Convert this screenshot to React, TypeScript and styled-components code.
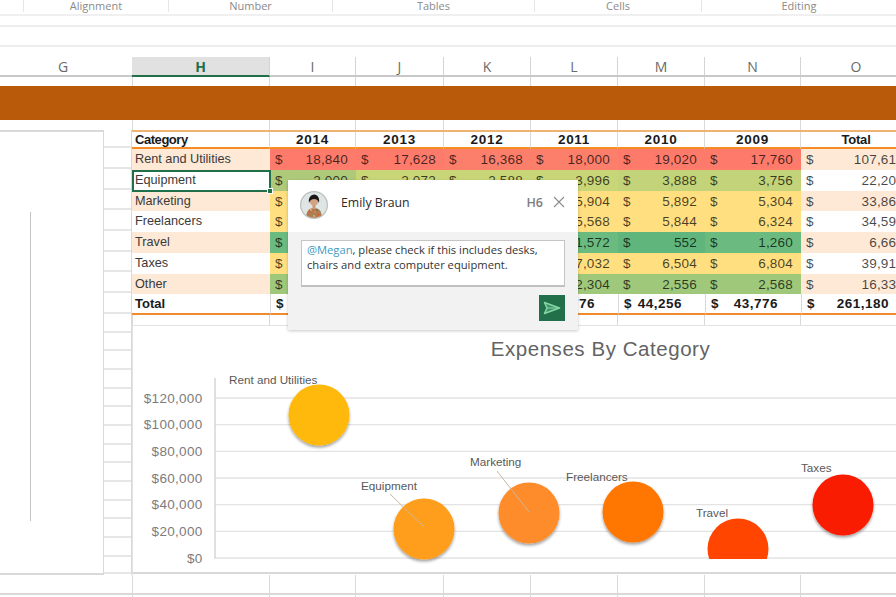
import React from "react";
import styled, { createGlobalStyle } from "styled-components";

const Global = createGlobalStyle`
  html, body { margin: 0; padding: 0; background: #fff; }
  * { box-sizing: border-box; }
`;

const COLS = [138, 86, 88, 87, 87, 87, 96, 111];
const LINE = "#d9d9d9";
const HEAT: Record<string, string> = {
  red: "#fe7b6b", red2: "#fc7f6c", lime: "#c9d678", olive: "#c2d37a", sage: "#aec97a", yellow: "#ffdf7f", yellow2: "#fedd7d",
  green: "#6bbb80", green2: "#5fb57b", moss: "#9fc87b", peach: "#fde9d6", white: "#ffffff",
};

type Row = { name: string; tint: string; cells: [string, string][]; total: string };
const ROWS: Row[] = [
  { name: "Rent and Utilities", tint: "peach", total: "107,616", cells: [["18,840", "red"], ["17,628", "red"], ["16,368", "red2"], ["18,000", "red2"], ["19,020", "red"], ["17,760", "red"]] },
  { name: "Equipment", tint: "white", total: "22,200", cells: [["2,000", "sage"], ["2,072", "lime"], ["2,588", "lime"], ["3,996", "lime"], ["3,888", "olive"], ["3,756", "olive"]] },
  { name: "Marketing", tint: "peach", total: "33,860", cells: [["5,000", "yellow"], ["5,000", "yellow"], ["5,000", "yellow"], ["5,904", "yellow"], ["5,892", "yellow"], ["5,304", "yellow"]] },
  { name: "Freelancers", tint: "white", total: "34,590", cells: [["5,000", "yellow"], ["5,000", "yellow"], ["5,000", "yellow"], ["5,568", "yellow"], ["5,844", "yellow"], ["6,324", "yellow"]] },
  { name: "Travel", tint: "peach", total: "6,660", cells: [["1,000", "green"], ["1,000", "green"], ["1,000", "green"], ["1,572", "green"], ["552", "green2"], ["1,260", "green"]] },
  { name: "Taxes", tint: "white", total: "39,910", cells: [["6,000", "yellow"], ["6,000", "yellow"], ["6,000", "yellow"], ["7,032", "yellow"], ["6,504", "yellow"], ["6,804", "yellow"]] },
  { name: "Other", tint: "peach", total: "16,330", cells: [["2,000", "moss"], ["2,000", "moss"], ["2,000", "moss"], ["2,304", "moss"], ["2,556", "moss"], ["2,568", "moss"]] },
];
const TOTALS = ["43,104", "43,080", "42,588", "43,776", "44,256", "43,776", "261,180"];
const YEARS = ["2014", "2013", "2012", "2011", "2010", "2009"];
const HEADS = ["H", "I", "J", "K", "L", "M", "N", "O"];
const RIBBON: [string, number][] = [["Alignment", 145], ["Number", 164], ["Tables", 202], ["Cells", 167], ["Editing", 195]];
const STUBS = [18, 21, 21, 20, 21, 21, 20, 21, 21, 19, 18, 19, 19, 18, 19, 19, 18, 19, 19, 18, 19, 19, 17];
const AXIS: [string, number][] = [["$120,000", 398], ["$100,000", 424.6], ["$80,000", 451.3], ["$60,000", 478], ["$40,000", 504.6], ["$20,000", 531.3], ["$0", 558]];
const BUBBLES: [number, number, string][] = [[319, 415, "#ffb908"], [424, 529, "#ff9e1a"], [529, 513, "#ff8c2b"], [633, 512, "#ff7700"], [843, 505, "#fa1b00"]];
const LABELS: [string, number, number][] = [["Rent and Utilities", 229, 384], ["Equipment", 361, 490], ["Marketing", 470, 466], ["Freelancers", 566, 481], ["Travel", 696, 517], ["Taxes", 801, 472]];
const SPECKS: [number, number, string][] = [[9, 21, "#d45f2e"], [12, 24, "#7f9a5a"], [15, 21, "#e08a4a"], [18, 24, "#d45f2e"], [20, 21, "#7f9a5a"], [14, 25, "#e8b27a"], [11, 19, "#e8b27a"], [17, 19, "#5f7a4a"]];

const Page = styled.div`
  position: relative;
  width: 896px;
  height: 597px;
  overflow: hidden;
  background: #fff;
  font-family: "Liberation Sans", Arial, sans-serif;
`;
const Ribbon = styled.div`
  display: flex;
  height: 16px;
  padding-left: 23px;
  border-bottom: 2px solid #f0f0f0;
`;
const RibbonGroup = styled.div<{ $w: number }>`
  width: ${(p) => p.$w}px;
  flex: none;
  height: 12px;
  border-left: 1px solid #e6e6e6;
  font: 11px/12px "Open Sans", sans-serif;
  color: #8a8a8a;
  text-align: center;
`;
const FormulaStrip = styled.div`
  height: 11px;
  border-bottom: 2px solid #ececec;
`;
const FormulaBar = styled.div`
  height: 20px;
  border-bottom: 2px solid #ececec;
`;
const ColumnHeaders = styled.div`
  display: flex;
  height: 20px;
  margin-top: 10px;
  border-bottom: 2px solid #c8c8c8;
`;
const CornerHead = styled.div`
  width: 132px;
  flex: none;
  padding-right: 6px;
  text-align: center;
  font: 14px/19px "Open Sans", sans-serif;
  color: #6a6a6a;
`;
const ColumnHead = styled.div<{ $w: number; $active?: boolean }>`
  width: ${(p) => p.$w}px;
  flex: none;
  height: ${(p) => (p.$active ? "20px" : "18px")};
  border-right: 1px solid #d4d4d4;
  text-align: center;
  font: ${(p) => (p.$active ? 700 : 400)} 14px/19px "Open Sans", sans-serif;
  color: ${(p) => (p.$active ? "#21704a" : "#6a6a6a")};
  background: ${(p) => (p.$active ? "#e1e1e1" : "transparent")};
  border-bottom: ${(p) => (p.$active ? "2px solid #21704a" : "0")};
`;
const BlankRow = styled.div<{ $h: number; $line?: boolean; $flush?: boolean }>`
  display: flex;
  height: ${(p) => p.$h}px;
  padding-left: ${(p) => (p.$flush ? 0 : 132)}px;
  border-bottom: ${(p) => (p.$line ? `2px solid ${LINE}` : "0")};
`;
const BlankCell = styled.div<{ $w: number }>`
  width: ${(p) => p.$w}px;
  flex: none;
  border-right: 1px solid ${LINE};
  &:first-child { border-left: 1px solid ${LINE}; }
`;
const Band = styled.div`
  height: 34px;
  background: #b85a0a;
`;
const Sheet = styled.div`
  display: flex;
  height: 445px;
`;
const Side = styled.div`
  display: flex;
  width: 132px;
  flex: none;
  height: 445px;
`;
const SidePanel = styled.div`
  width: 104px;
  border-top: 2px solid ${LINE};
  border-right: 1px solid ${LINE};
  border-bottom: 2px solid ${LINE};
  padding: 80px 0 0 30px;
`;
const SideRule = styled.div`
  width: 1px;
  height: 309px;
  background: #c4c4c4;
`;
const Stubs = styled.div`
  width: 28px;
  border-right: 1px solid ${LINE};
`;
const Stub = styled.div<{ $h: number }>`
  height: ${(p) => p.$h}px;
  border-bottom: 2px solid #e6e6e6;
`;
const Main = styled.div`
  flex: 1;
  min-width: 0;
  overflow: hidden;
`;
const Table = styled.div`
  display: grid;
  grid-template-columns: ${COLS.map((c) => `${c}px`).join(" ")};
  grid-template-rows: 17px repeat(7, 20.75px) 20.75px;
  height: 185px;
  border-top: 2px solid #eeb273;
  font-size: 13.5px;
`;
const HeadCell = styled.div<{ $left?: boolean; $tight?: boolean }>`
  border-bottom: 2px solid #f58c26;
  border-right: 1px solid ${LINE};
  padding: 0 ${(p) => (p.$left ? "3px" : "0")};
  font: 700 ${(p) => (p.$left || p.$tight ? 13 : 13.5)}px/16px "Liberation Sans", sans-serif;
  letter-spacing: ${(p) => (p.$left ? "-0.45px" : p.$tight ? "-0.2px" : "0.7px")};
  color: #1a1a1a;
  text-align: ${(p) => (p.$left ? "left" : "center")};
`;
const NameCell = styled.div<{ $tint: string }>`
  position: relative;
  padding-left: 3px;
  background: ${(p) => HEAT[p.$tint]};
  font-size: 12.7px;
  line-height: 21px;
  color: #3a3a3a;
`;
const SelectedCell = styled.div`
  position: absolute;
  inset: 0 -1px -1px 0;
  z-index: 1;
  border: 2px solid #21704a;
`;
const Handle = styled.div`
  position: absolute;
  right: -4px;
  bottom: -4px;
  width: 6px;
  height: 6px;
  background: #21704a;
  border: 1px solid #fff;
`;
const AmountCell = styled.div<{ $tint: string }>`
  display: flex;
  justify-content: space-between;
  padding: 0 8px 0 5px;
  background: ${(p) => HEAT[p.$tint]};
  line-height: 21px;
  letter-spacing: 0.2px;
  color: rgba(0, 0, 0, 0.72);
`;
const TotalName = styled.div`
  padding-left: 3px;
  border-bottom: 2px solid #f08a2c;
  font: 700 13px/20px "Liberation Sans", sans-serif;
  color: #1a1a1a;
`;
const TotalCell = styled.div`
  display: flex;
  justify-content: space-between;
  padding: 0 23px 0 5px;
  border-bottom: 2px solid #f08a2c;
  border-left: 1px solid ${LINE};
  font: 700 13.5px/20px "Liberation Sans", sans-serif;
  letter-spacing: 0.5px;
  color: #1a1a1a;
`;
const ChartFrame = styled.div`
  height: 249px;
  border: 1px solid #e2e2e2;
  border-width: 1px 0 2px 1px;
  border-bottom-color: #d8d8d8;
  svg { display: block; }
`;
const Card = styled.div`
  position: absolute;
  left: 288px;
  top: 180px;
  width: 290px;
  height: 150px;
  background: #f2f2f2;
  box-shadow: 0 1px 3px rgba(0, 0, 0, 0.22);
  font-family: "Open Sans", sans-serif;
`;
const CardHead = styled.div`
  display: flex;
  align-items: center;
  height: 52px;
  padding: 0 13px 8px 12px;
  background: #fff;
`;
const Avatar = styled.svg`
  width: 28px;
  height: 28px;
  flex: none;
  margin-top: 6px;
`;
const Author = styled.div`
  flex: 1;
  margin-left: 13px;
  font-size: 12.3px;
  color: #2b2b2b;
`;
const CellRef = styled.div`
  margin-right: 10px;
  font-size: 12.5px;
  font-weight: 600;
  color: #7d7d7d;
`;
const CardBody = styled.div`
  display: flex;
  flex-direction: column;
  align-items: flex-end;
  padding: 8px 13px 0;
`;
const Note = styled.div`
  width: 100%;
  height: 47px;
  padding: 2px 5px;
  background: #fff;
  border: 1px solid #c4c4c4;
  border-bottom: 2px solid #c0c0c0;
  font-size: 11.2px;
  line-height: 14.5px;
  color: #333;
`;
const Mention = styled.span`
  color: #3d9ac2;
`;
const SendButton = styled.button`
  display: flex;
  align-items: center;
  justify-content: center;
  width: 26px;
  height: 26px;
  margin-top: 8px;
  padding: 0;
  border: 0;
  background: #21704a;
`;

function AvatarPicture() {
  return (
    <Avatar viewBox="0 0 28 28">
      <circle cx="14" cy="14" r="14" fill="#b9c0bd" />
      <circle cx="14" cy="14" r="12.8" fill="#dfe5e4" />
      <clipPath id="avatarClip"><circle cx="14" cy="14" r="12.8" /></clipPath>
      <g clipPath="url(#avatarClip)">
        <path d="M6 28c0-8 3-11 8-11s8 3 8 11z" fill="#b27a50" />
        {SPECKS.map(([x, y, c], i) => <circle key={i} cx={x} cy={y} r="0.9" fill={c} />)}
        <rect x="12.5" y="13" width="3" height="5" fill="#c99878" />
        <circle cx="14" cy="10.5" r="4" fill="#d4a182" />
        <path d="M9 12c-1-5 2-8.500 5.200-8.500S20 7 19 12c-.8-2.500-2.500-4-4.800-4S9.800 9.500 9 12z" fill="#171717" />
      </g>
    </Avatar>
  );
}

function ExpenseChart() {
  return (
    <svg width="764" height="246" viewBox="133 326 764 246">
      <defs>
        <filter id="bubbleShadow" x="-20%" y="-20%" width="140%" height="140%">
          <feDropShadow dx="0" dy="2" stdDeviation="1.8" floodColor="#000" floodOpacity="0.38" />
        </filter>
        <clipPath id="plotClip"><rect x="215" y="370" width="690" height="189" /></clipPath>
      </defs>
      <text x="600.500" y="356" textAnchor="middle" fontFamily="Liberation Sans" fontSize="20.500" letterSpacing="0.55" fill="#636363">Expenses By Category</text>
      {AXIS.map(([label, y]) => (
        <g key={label}>
          <line x1="215" x2="897" y1={y} y2={y} stroke="#e3e3e3" strokeWidth="1.300" />
          <text x="202.500" y={y + 4.500} textAnchor="end" fontFamily="Liberation Sans" fontSize="13.500" letterSpacing="0.3" fill="#7c7c7c">{label}</text>
        </g>
      ))}
      <line x1="215" x2="215" y1="378" y2="558.500" stroke="#cfcfcf" strokeWidth="1.300" />
      <circle cx="738" cy="549" r="30.500" fill="#ff4500" clipPath="url(#plotClip)" />
      {BUBBLES.map(([cx, cy, fill]) => (
        <circle key={cx} cx={cx} cy={cy} r="30.500" fill={fill} filter="url(#bubbleShadow)" />
      ))}
      <line x1="390" y1="494" x2="424" y2="527" stroke="#c8b89e" strokeWidth="1" />
      <line x1="497" y1="471" x2="529" y2="512" stroke="#c8b89e" strokeWidth="1" />
      {LABELS.map(([text, x, y]) => (
        <text key={text} x={x} y={y} fontFamily="Liberation Sans" fontSize="11.700" fill="#595959">{text}</text>
      ))}
    </svg>
  );
}

export default function App() {
  return (
    <Page>
      <Global />
      <Ribbon>
        {RIBBON.map(([label, w]) => (
          <RibbonGroup key={label} $w={w}>{label}</RibbonGroup>
        ))}
      </Ribbon>
      <FormulaStrip />
      <FormulaBar />
      <ColumnHeaders>
        <CornerHead>G</CornerHead>
        {HEADS.map((h, i) => (
          <ColumnHead key={h} $w={COLS[i]} $active={h === "H"}>{h}</ColumnHead>
        ))}
      </ColumnHeaders>
      <BlankRow $h={9}>{COLS.map((c, i) => <BlankCell key={i} $w={c} />)}</BlankRow>
      <Band />
      <BlankRow $h={10}>{COLS.map((c, i) => <BlankCell key={i} $w={c} />)}</BlankRow>
      <Sheet>
        <Side>
          <SidePanel><SideRule /></SidePanel>
          <Stubs>{STUBS.map((h, i) => <Stub key={i} $h={h} />)}</Stubs>
        </Side>
        <Main>
          <Table>
            <HeadCell $left>Category</HeadCell>
            {YEARS.map((y) => <HeadCell key={y}>{y}</HeadCell>)}
            <HeadCell $tight>Total</HeadCell>
            {ROWS.flatMap((r) => [
              <NameCell key={r.name} $tint={r.tint}>
                {r.name}
                {r.name === "Equipment" && <SelectedCell><Handle /></SelectedCell>}
              </NameCell>,
              ...r.cells.map(([v, tint], i) => (
                <AmountCell key={r.name + i} $tint={tint}><span>$</span><span>{v}</span></AmountCell>
              )),
              <AmountCell key={r.name + "t"} $tint={r.tint}><span>$</span><span>{r.total}</span></AmountCell>,
            ])}
            <TotalName>Total</TotalName>
            {TOTALS.map((v, i) => (
              <TotalCell key={i}><span>$</span><span>{v}</span></TotalCell>
            ))}
          </Table>
          <BlankRow $h={10} $flush>{COLS.map((c, i) => <BlankCell key={i} $w={c} />)}</BlankRow>
          <ChartFrame><ExpenseChart /></ChartFrame>
        </Main>
      </Sheet>
      <BlankRow $h={20} $line>{COLS.map((c, i) => <BlankCell key={i} $w={c} />)}</BlankRow>
      <BlankRow $h={3}>{COLS.map((c, i) => <BlankCell key={i} $w={c} />)}</BlankRow>
      <Card>
        <CardHead>
          <AvatarPicture />
          <Author>Emily Braun</Author>
          <CellRef>H6</CellRef>
          <svg width="12" height="12" viewBox="0 0 12 12"><path d="M1 1l10 10M11 1L1 11" stroke="#8c8c8c" strokeWidth="1.100" fill="none" /></svg>
        </CardHead>
        <CardBody>
          <Note><Mention>@Megan</Mention>, please check if this includes desks, chairs and extra computer equipment.</Note>
          <SendButton aria-label="Send">
            <svg width="18" height="14" viewBox="0 0 18 14"><path d="M1.500 1.500L16.500 7 1.500 12.500 4 7z" fill="#3f8f68" stroke="#86d6a6" strokeWidth="1.500" strokeLinejoin="round" /><path d="M4 7h12" stroke="#86d6a6" strokeWidth="1" /></svg>
          </SendButton>
        </CardBody>
      </Card>
    </Page>
  );
}
